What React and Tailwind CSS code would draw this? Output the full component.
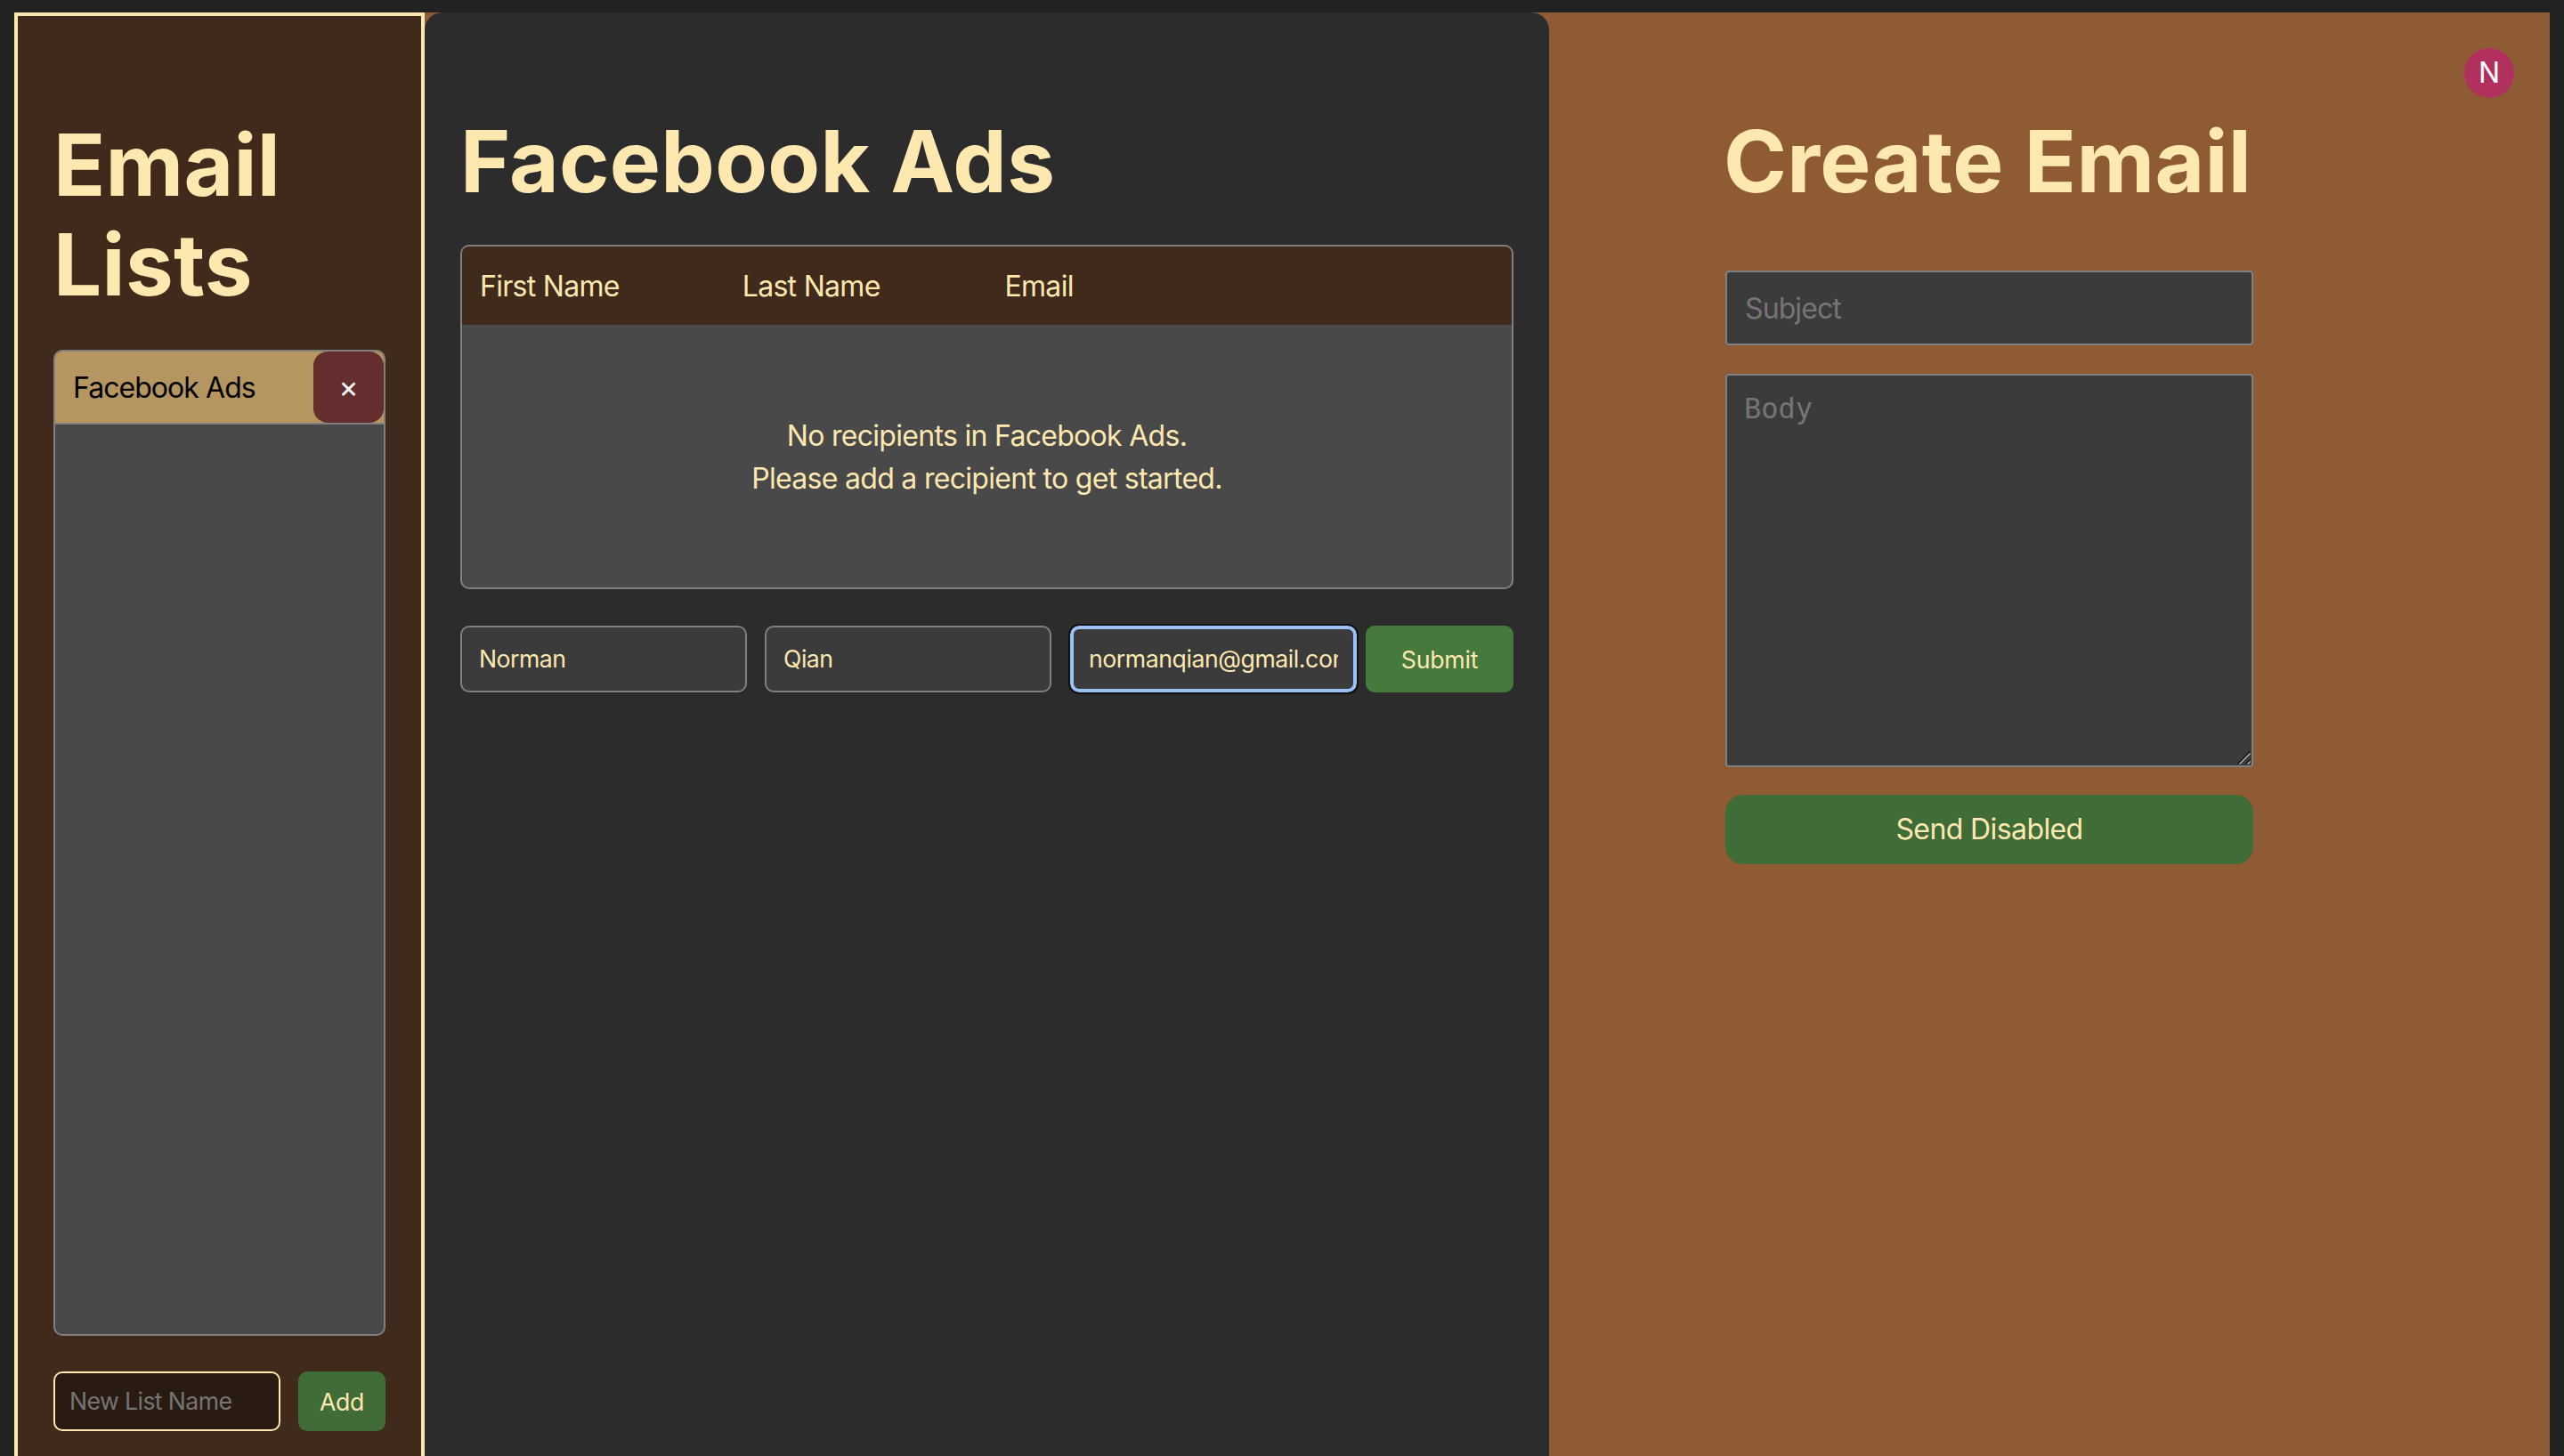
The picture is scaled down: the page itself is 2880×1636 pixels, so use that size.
import React from 'react';

const inputBase = 'bg-[#3b3b3b] border-2 border-[#808080] text-[#fde8b0] outline-none placeholder:text-[#757575]';
const titleText = 'text-[96px] leading-[112px] font-bold tracking-[0.3px] text-[#fde8b0] whitespace-pre-line';

const Sidebar = () => (
    <aside className="w-[461px] shrink-0 h-full flex flex-col bg-[#3f2a1c] border-4 border-b-0 border-[#fde8b0] px-[40px]">
        <h1 className={`${titleText} mt-[111px] mb-[40px]`}>Email Lists</h1>
        <div className="flex-1 min-h-0 bg-[#494949] border-2 border-[#808080] rounded-[10px] overflow-hidden">
            <div className="h-[80px] flex items-center justify-between bg-[#b59660] border-b-2 border-[#808080] box-content">
                <span className="pl-[20px] pt-[2px] text-[32px] tracking-[-0.95px] text-black">Facebook Ads</span>
                <button className="w-[79px] h-[80px] bg-[#652e2e] rounded-[16px] text-white text-[34px] leading-none">×</button>
            </div>
        </div>
        <div className="flex gap-[20px] mt-[40px] mb-[28px]">
            <input
                placeholder="New List Name"
                className="w-[255px] h-[67px] px-[16px] pb-[1px] bg-[#2a1b12] border-2 border-[#fde8b0] rounded-[10px] text-[26.67px] tracking-[-0.6px] text-[#fde8b0] outline-none placeholder:text-[#757575]"
            />
            <button className="w-[98px] h-[67px] bg-[#406c37] rounded-[10px] text-[26.67px] tracking-[-0.3px] text-[#fde8b0]">Add</button>
        </div>
    </aside>
);

const Recipients = () => (
    <section className="w-[1263px] shrink-0 h-full bg-[#2c2c2c] rounded-t-[20px] px-[40px]">
        <h1 className={`${titleText} mt-[111px] mb-[38px]`}>Facebook Ads</h1>
        <div className="h-[387px] flex flex-col bg-[#494949] border-2 border-[#808080] rounded-[10px] overflow-hidden">
            <div className="h-[88px] grid grid-cols-4 items-center pt-[2px] bg-[#3f2a1c] text-[32px] tracking-[-0.7px] text-[#fde8b0]">
                <span className="pl-[20px]">First Name</span>
                <span className="pl-[20px]">Last Name</span>
                <span className="pl-[20px]">Email</span>
            </div>
            <div className="flex-1 flex flex-col items-center justify-center pt-[2px] text-[32px] leading-[48px] tracking-[-0.7px] text-[#fde8b0]">
                <p>No recipients in Facebook Ads.</p>
                <p>Please add a recipient to get started.</p>
            </div>
        </div>
        <div className="flex items-center mt-[41px]">
            <input readOnly value="Norman" className={`${inputBase} w-[322px] h-[75px] px-[19px] pb-[2px] rounded-[10px] text-[26.67px] tracking-[-0.5px]`} />
            <input readOnly value="Qian" className={`${inputBase} w-[322px] h-[75px] px-[19px] pb-[2px] rounded-[10px] text-[26.67px] tracking-[-0.5px] ml-[20px]`} />
            <input
                readOnly
                value="normanqian@gmail.com"
                className="w-[322px] h-[75px] ml-[21px] px-[17px] pb-[2px] bg-[#3b3b3b] border-4 border-[#9ac2f5] rounded-[10px] text-[26.67px] tracking-[-0.45px] text-[#fde8b0] outline-2 outline-[#111111]"
            />
            <button className="w-[167px] h-[75px] ml-[10px] bg-[#467a3c] rounded-[10px] text-[26.67px] tracking-[-0.2px] text-[#fde8b0]">Submit</button>
        </div>
    </section>
);

const Composer = () => (
    <section className="relative flex-1 pl-[198px]">
        <div className="absolute top-[40px] right-[40px] w-[56px] h-[56px] rounded-full bg-[#b1305d] flex items-center justify-center text-[32px] text-white">N</div>
        <div className="w-[593px]">
            <h1 className={`${titleText} -ml-[2px] mt-[111px] mb-[67px] whitespace-nowrap`}>Create Email</h1>
            <input placeholder="Subject" className={`${inputBase} block w-full h-[84px] px-[20px] rounded-[4px] text-[32px] tracking-[-0.9px]`} />
            <div className="relative mt-[32px]">
                <textarea
                    placeholder="Body"
                    className={`${inputBase} block w-full h-[442px] px-[19px] py-[13px] rounded-[4px] text-[32px] resize-none font-['DejaVu_Sans_Mono',monospace]`}
                />
                {/* textarea resize grip */}
                <svg className="absolute right-[3px] bottom-[3px] pointer-events-none" width="15" height="15" viewBox="0 0 15 15">
                    <path d="M1 14 L14 1 M10 14 L14 10" stroke="#111111" strokeWidth="1.5" fill="none" />
                    <path d="M2.5 14.5 L14.5 2.5 M11.5 14.5 L14.5 11.5" stroke="#c4c4c4" strokeWidth="1.2" fill="none" />
                </svg>
            </div>
            <button className="block w-full h-[78px] mt-[31px] bg-[#406c37] rounded-[20px] text-[32px] tracking-[-0.6px] text-[#fde8b0]">Send Disabled</button>
        </div>
    </section>
);

export default function App() {
    return (
        <div className="h-screen overflow-hidden flex pt-[14px] px-[16px] bg-[#222222] font-['Inter',sans-serif]">
            <Sidebar />
            <main className="flex-1 flex h-full bg-[#8f5b34]">
                <Recipients />
                <Composer />
            </main>
        </div>
    );
}
